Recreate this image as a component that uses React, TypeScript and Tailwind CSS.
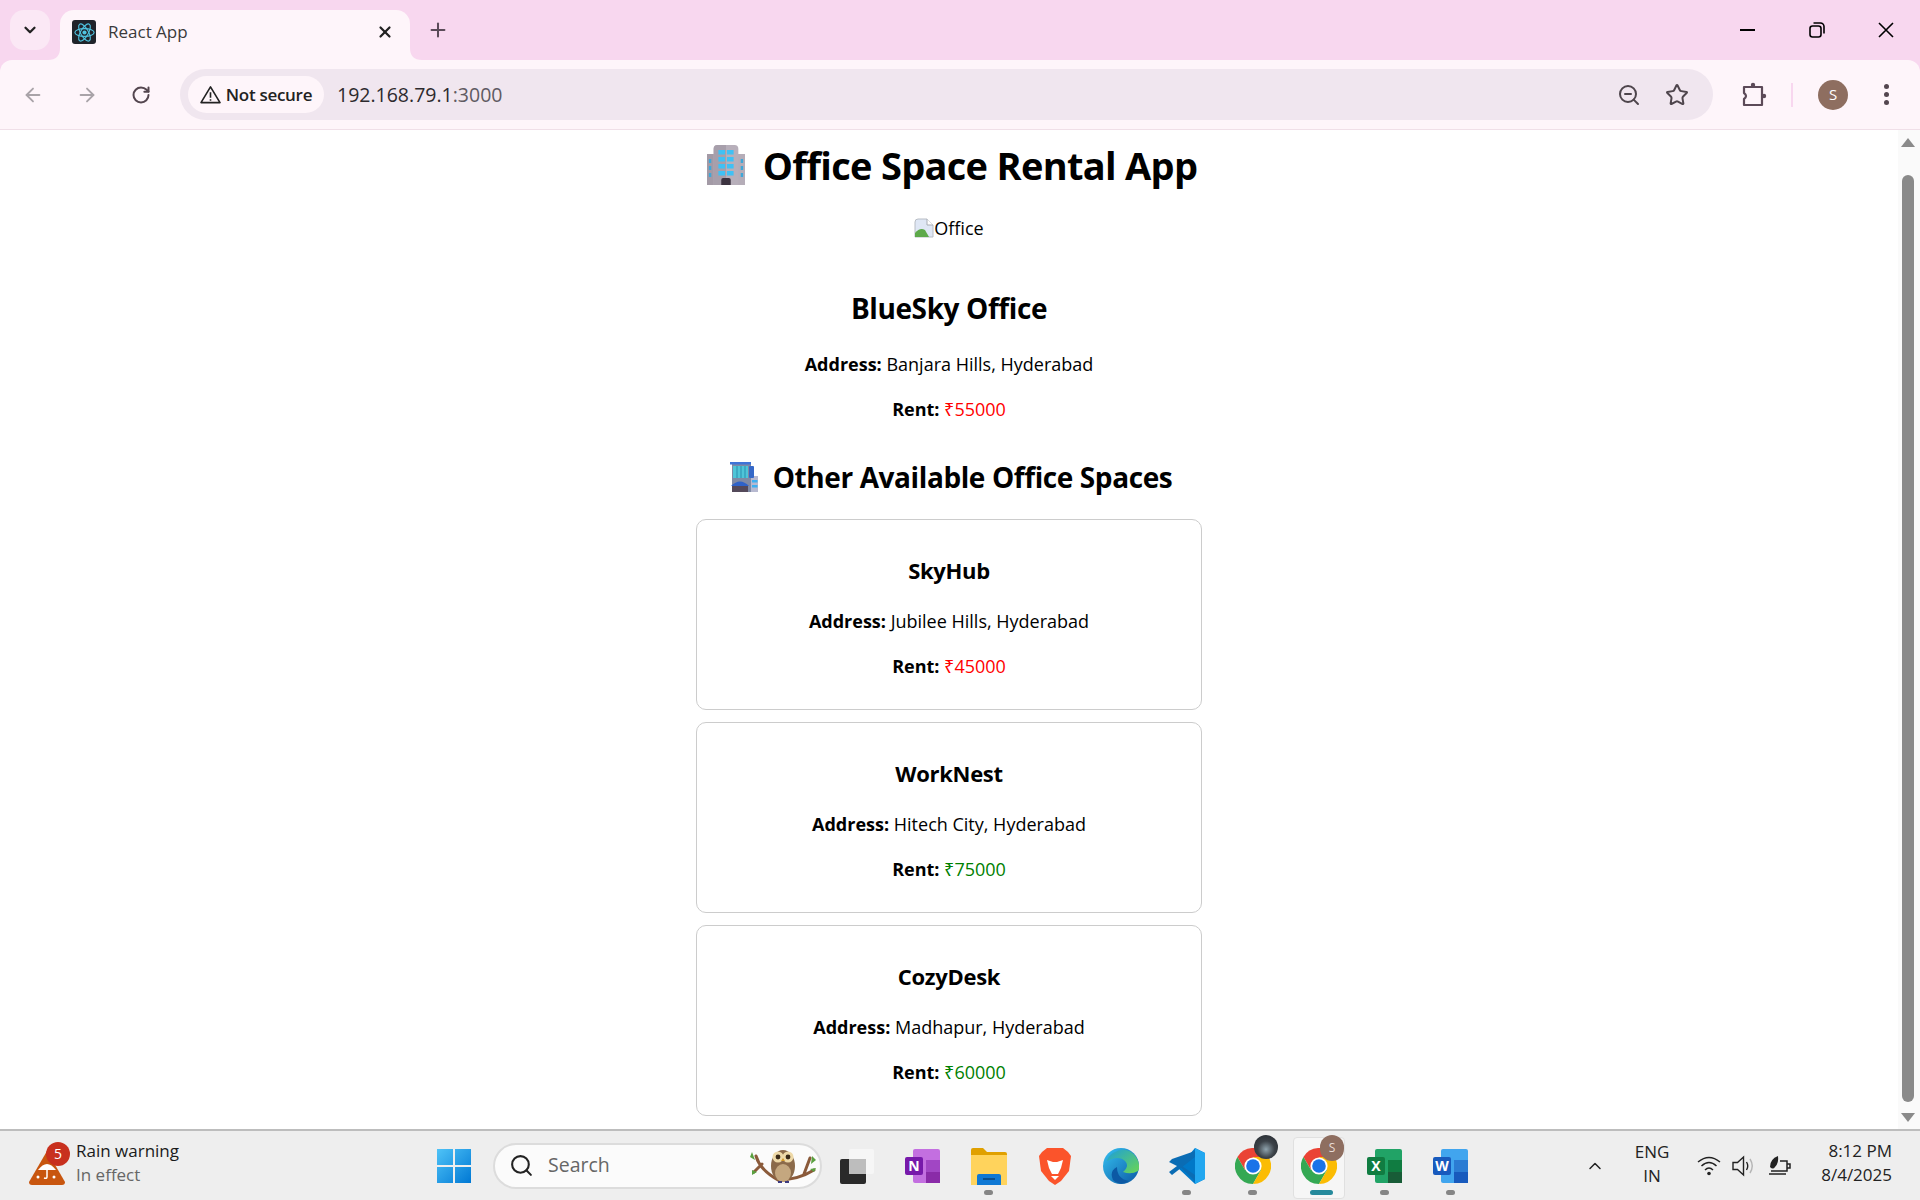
import React from "react";
import { ArrowLeft, ArrowRight, RotateCw, ZoomOut, Star, ChevronDown, X, Plus, Search, ChevronUp } from "lucide-react";

const BODY = { fontFamily: '"Open Sans","Noto Sans",sans-serif' };

function Atom({ size = 21 }: { size?: number }) {
  return (
    <svg width={size} height={size} viewBox="0 0 24 24" fill="none" stroke="#4fc3e0" strokeWidth="1.3">
      <circle cx="12" cy="12" r="2.4" fill="#4fc3e0" stroke="none" />
      <ellipse cx="12" cy="12" rx="11" ry="4.4" />
      <ellipse cx="12" cy="12" rx="11" ry="4.4" transform="rotate(60 12 12)" />
      <ellipse cx="12" cy="12" rx="11" ry="4.4" transform="rotate(120 12 12)" />
    </svg>
  );
}

function OfficeEmoji() {
  return (
    <svg width="38" height="40" viewBox="0 0 40 40" preserveAspectRatio="none">
      <rect x="0" y="9" width="9" height="31" fill="#a39aa6" />
      <rect x="31" y="9" width="9" height="31" fill="#b5adb8" />
      <path d="M7 4 Q7 0 11 0 H29 Q33 0 33 4 V40 H7Z" fill="#b7afba" />
      <path d="M7 4 Q7 0 11 0 H20 V40 H7Z" fill="#a79fab" />
      {[5, 12, 19, 26].map((y) => (
        <g key={y} fill="#3fc1f5">
          <rect x="12" y={y} width="7" height="4.5" />
          <rect x="21" y={y} width="7" height="4.5" />
        </g>
      ))}
      {[14, 21, 28].map((y) => (
        <g key={y} fill="#3fa7d8">
          <rect x="2" y={y} width="2.5" height="4" />
          <rect x="35.5" y={y} width="2.5" height="4" />
        </g>
      ))}
      <path d="M15 40 V35 Q15 33 17 33 H23 Q25 33 25 35 V40Z" fill="#3c3340" />
    </svg>
  );
}

function CityEmoji() {
  return (
    <svg width="28" height="30" viewBox="0 0 28 30">
      <rect x="2" y="1" width="19" height="29" fill="#7f8aa5" />
      <rect x="0" y="0" width="21" height="2.5" fill="#3f74d8" />
      <rect x="3" y="4" width="15" height="12" fill="#4fc5d8" />
      <path d="M7 4v12M11 4v12M15 4v12" stroke="#2a8fb0" strokeWidth="1" />
      <rect x="21" y="14" width="7" height="16" fill="#b7b9d0" />
      <rect x="22" y="18" width="5.5" height="2.5" fill="#3fb0f0" />
      <rect x="22" y="23" width="5.5" height="2.5" fill="#3fb0f0" />
      <rect x="19" y="4" width="5" height="12" rx="1" fill="#3568c8" />
      <path d="M1 24 Q10 15 19 24Z" fill="#2f62c8" />
      <rect x="2" y="24" width="16" height="6" fill="#54495a" />
    </svg>
  );
}

function BrokenImage() {
  return (
    <svg width="20" height="20" viewBox="0 0 20 20" className="shrink-0">
      <path d="M1 4 Q1 1 4 1 H13 L19 7 V19 H1Z" fill="#dfe7f5" stroke="#b8bdc5" strokeWidth="1" />
      <path d="M13 1 V7 H19" fill="#fff" stroke="#a8adb5" strokeWidth="1" />
      <path d="M1 19 V15 Q6 9 11 12 L15 19Z" fill="#5da94a" />
    </svg>
  );
}

function Chrome({ size = 36 }: { size?: number }) {
  return (
    <svg width={size} height={size} viewBox="0 0 36 36">
      <path d="M18 18 L33.6 9 A18 18 0 0 0 2.4 9 L10 22Z" fill="#ea4335" />
      <path d="M18 18 L10 22 L2.4 9 A18 18 0 0 0 18 36 L26 22Z" fill="#34a853" />
      <path d="M18 18 L26 22 L18 36 A18 18 0 0 0 33.6 9 L18 9Z" fill="#fbbc04" />
      <circle cx="18" cy="18" r="8.6" fill="#fff" />
      <circle cx="18" cy="18" r="6.8" fill="#1a73e8" />
    </svg>
  );
}

function Owl() {
  return (
    <svg width="72" height="44" viewBox="0 0 72 44">
      <path d="M8 12 Q12 26 30 36 Q50 36 66 26 M14 20 L6 28 M56 30 L62 14" stroke="#8a5a3a" strokeWidth="3" fill="none" strokeLinecap="round" />
      <path d="M4 8 l3 8 -5 -3Z M4 26 l5 2 -5 3Z M64 12 l-1 8 5 -4Z M68 24 l-6 1 4 3Z" fill="#5aa040" />
      <ellipse cx="35" cy="22" rx="12" ry="16" fill="#8b6a4a" />
      <ellipse cx="35" cy="29" rx="8" ry="9" fill="#c4a77f" />
      <circle cx="30" cy="13" r="5.5" fill="#eed9a8" />
      <circle cx="40" cy="13" r="5.5" fill="#eed9a8" />
      <circle cx="30" cy="13" r="2.4" fill="#3a2a18" />
      <circle cx="40" cy="13" r="2.4" fill="#3a2a18" />
      <path d="M35 14 l-2 3 h4Z" fill="#d59a2a" />
      <path d="M30 38 h4 M37 38 h4" stroke="#3c3a80" strokeWidth="2" />
    </svg>
  );
}

function TaskIcon({ children, dot }: { children: React.ReactNode; dot?: boolean }) {
  return (
    <div className="relative flex h-[69px] w-[66px] shrink-0 items-center justify-center">
      {children}
      {dot ? <span className="absolute bottom-[5px] left-[28px] h-[5px] w-[9px] rounded-full bg-[#858585]" /> : null}
    </div>
  );
}

function OfficeIcon({ bg, dark, mid, letter, letterBg }: { bg: string; dark: string; mid: string; letter: string; letterBg: string }) {
  return (
    <svg width="36" height="36" viewBox="0 0 36 36">
      <rect x="8" y="1" width="27" height="34" rx="2" fill={bg} />
      <rect x="21" y="12" width="14" height="12" fill={mid} />
      <rect x="21" y="24" width="14" height="11" fill={dark} />
      <rect x="0" y="9" width="18" height="18" rx="2" fill={letterBg} />
      <text x="9" y="23" textAnchor="middle" fill="#fff" fontSize="14" fontWeight="700" fontFamily="Open Sans, sans-serif">{letter}</text>
    </svg>
  );
}

function Office({ name, address, rent, color }: { name: string; address: string; rent: string; color: string }) {
  return (
    <section className="mb-[12px] flex h-[191px] w-[506px] shrink-0 flex-col items-center rounded-[10px] border border-[#cccccc] pt-[34px]">
      <h3 className="mb-[23px] text-[22px] font-bold leading-[32px] tracking-[-0.3px] text-black">{name}</h3>
      <p className="mb-[21px] text-[18px] leading-[24px] text-black"><b>Address:</b> {address}</p>
      <p className="text-[18px] leading-[24px] text-black"><b>Rent:</b> <span className={color}>{rent}</span></p>
    </section>
  );
}

export default function App() {
  return (
    <div className="flex h-[1200px] w-[1920px] flex-col overflow-hidden bg-white" style={BODY}>
      {/* tab strip */}
      <div className="flex h-[60px] shrink-0 bg-[#f8d7ef]">
        <div className="ml-[10px] mt-[10px] flex h-[40px] w-[40px] items-center justify-center rounded-[14px] bg-[#fbe8f5]">
          <ChevronDown size={18} strokeWidth={3} color="#222" />
        </div>
        <div className="relative ml-[10px] mt-[10px] flex h-[50px] w-[350px] items-center rounded-t-[14px] bg-[#fef5fa] pb-[6px] pl-[12px] pr-[16px]">
          <svg width="12" height="12" viewBox="0 0 12 12" className="absolute bottom-0 left-[-12px]"><path d="M12 0 V12 H0 Q12 12 12 0Z" fill="#fef5fa" /></svg>
          <svg width="12" height="12" viewBox="0 0 12 12" className="absolute bottom-0 right-[-12px]"><path d="M0 0 V12 H12 Q0 12 0 0Z" fill="#fef5fa" /></svg>
          <span className="flex h-[24px] w-[24px] items-center justify-center rounded-[3px] bg-[#20232a]"><Atom /></span>
          <span className="ml-[12px] flex-1 text-[17px] text-[#3a3a3a]">React App</span>
          <X size={18} strokeWidth={3} color="#222" />
        </div>
        <div className="ml-[16px] flex w-[24px] items-center justify-center"><Plus size={22} strokeWidth={2.2} color="#5a4a58" /></div>
        <div className="flex-1" />
        <div className="flex w-[69px] items-center justify-center"><span className="h-[2px] w-[15px] bg-black" /></div>
        <div className="flex w-[69px] items-center justify-center">
          <svg width="16" height="16" viewBox="0 0 16 16" fill="none" stroke="#000" strokeWidth="1.6"><rect x="1" y="4" width="11" height="11" rx="2.5" /><path d="M4.5 1h7a3.5 3.5 0 0 1 3.5 3.5v7" /></svg>
        </div>
        <div className="flex w-[69px] items-center justify-center">
          <svg width="16" height="16" viewBox="0 0 16 16" stroke="#000" strokeWidth="1.6"><path d="M1 1l14 14M15 1L1 15" /></svg>
        </div>
      </div>

      {/* toolbar */}
      <div className="flex h-[70px] shrink-0 items-start border-b-[1px] border-[#f0dfe8] bg-[#f8d7ef]">
        <div className="flex h-[69px] w-full items-center rounded-t-[12px] bg-[#fef5fa] pl-[6px]">
          <div className="flex w-[54px] justify-center"><ArrowLeft size={22} strokeWidth={2} color="#a9a3a8" /></div>
          <div className="flex w-[54px] justify-center"><ArrowRight size={22} strokeWidth={2} color="#a9a3a8" /></div>
          <div className="flex w-[54px] justify-center"><RotateCw size={20} strokeWidth={2.4} color="#54464f" /></div>
          <div className="ml-[12px] flex h-[51px] w-[1533px] items-center rounded-full bg-[#f0e6ef] pl-[8px]">
            <div className="flex h-[37px] w-[136px] items-center justify-center gap-[5px] rounded-full bg-[#fef5fa]">
              <svg width="21" height="19" viewBox="0 0 22 20" fill="none" stroke="#222" strokeWidth="1.7" className="shrink-0"><path d="M11 2 L21 18.5 H1Z" strokeLinejoin="round" /><path d="M11 7.5v6M11 15v1.6" /></svg>
              <span className="whitespace-nowrap text-[17px] font-semibold tracking-[-0.3px] text-[#222]">Not secure</span>
            </div>
            <span className="ml-[13px] text-[19.5px] text-[#2d2a2e]">192.168.79.1<span className="text-[#5f5a62]">:3000</span></span>
            <div className="flex-1" />
            <ZoomOut size={24} strokeWidth={2} color="#4e454c" />
            <Star size={24} strokeWidth={2} color="#4e454c" className="ml-[24px] mr-[24px]" />
          </div>
          <div className="ml-[20px] flex w-[40px] justify-center">
            <svg width="28" height="28" viewBox="0 0 28 28" fill="none" stroke="#5c4a58" strokeWidth="2.2" strokeLinejoin="round">
              <path d="M5 6 H23 V24 H5 V18 Q9 15 5 12Z" />
              <circle cx="14" cy="4" r="2.2" fill="#5c4a58" stroke="none" />
              <circle cx="25" cy="15" r="2.2" fill="#5c4a58" stroke="none" />
            </svg>
          </div>
          <span className="ml-[18px] h-[24px] w-[2px] bg-[#f8d7ef]" />
          <div className="ml-[25px] flex h-[30px] w-[30px] items-center justify-center rounded-full bg-[#8e6e60] text-[15px] text-white">S</div>
          <div className="ml-[28px] flex w-[20px] flex-col items-center gap-[3px]">
            <span className="h-[5px] w-[5px] rounded-full bg-[#54464f]" />
            <span className="h-[5px] w-[5px] rounded-full bg-[#54464f]" />
            <span className="h-[5px] w-[5px] rounded-full bg-[#54464f]" />
          </div>
        </div>
      </div>

      {/* page */}
      <div className="flex min-h-0 flex-1">
        <main className="flex flex-1 flex-col items-center">
          <h1 className="flex h-[70px] shrink-0 items-center pl-[6px] text-[38px] font-bold tracking-[-0.7px] text-black">
            <OfficeEmoji /><span className="ml-[18px]">Office Space Rental App</span>
          </h1>
          <div className="mt-[10px] flex h-[36px] shrink-0 items-center text-[18px] text-black"><BrokenImage /><span>Office</span></div>
          <h2 className="mt-[44px] text-[28px] font-bold leading-[36px] tracking-[-0.4px] text-black">BlueSky Office</h2>
          <p className="mt-[26px] text-[18px] leading-[24px] text-black"><b>Address:</b> Banjara Hills, Hyderabad</p>
          <p className="mt-[21px] text-[18px] leading-[24px] text-black"><b>Rent:</b> <span className="text-[#ff0000]">₹55000</span></p>
          <h2 className="mb-[24px] mt-[38px] flex h-[36px] shrink-0 items-center pl-[4px] text-[28px] font-bold tracking-[-0.4px] text-black">
            <CityEmoji /><span className="ml-[15px]">Other Available Office Spaces</span>
          </h2>
          <Office name="SkyHub" address="Jubilee Hills, Hyderabad" rent="₹45000" color="text-[#ff0000]" />
          <Office name="WorkNest" address="Hitech City, Hyderabad" rent="₹75000" color="text-[#008000]" />
          <Office name="CozyDesk" address="Madhapur, Hyderabad" rent="₹60000" color="text-[#008000]" />
        </main>
        <aside className="flex w-[22px] shrink-0 flex-col items-center bg-[#fafafa] pr-[2px]">
          <svg width="14" height="10" viewBox="0 0 14 10" className="mt-[8px]"><path d="M7 0 L14 9 H0Z" fill="#8a8a8a" /></svg>
          <div className="mt-[27px] w-[12px] flex-1 rounded-full bg-[#8a8a8a]" />
          <svg width="14" height="10" viewBox="0 0 14 10" className="mb-[6px] mt-[11px]"><path d="M0 0 H14 L7 9Z" fill="#8a8a8a" /></svg>
        </aside>
      </div>

      {/* taskbar */}
      <div className="flex h-[71px] shrink-0 items-center border-t-[2px] border-[#bdbdbd] bg-[#eeeeee]">
        <div className="flex w-[421px] shrink-0 items-center pl-[28px]">
          <div className="relative h-[42px] w-[48px]">
            <svg width="38" height="38" viewBox="0 0 38 38" className="absolute bottom-0 left-0">
              <path d="M19 2 L37 33 Q37 36 34 36 H4 Q1 36 1 33Z" fill="#c8560f" />
              <path d="M10 21 Q19 9 28 21Z" fill="#fff" />
              <path d="M19 21 v7 q0 2 -3 1" stroke="#fff" strokeWidth="1.5" fill="none" />
              <circle cx="10" cy="28" r="1.5" fill="#fff" /><circle cx="26" cy="28" r="1.5" fill="#fff" />
            </svg>
            <span className="absolute left-[18px] top-[-3px] flex h-[24px] w-[24px] items-center justify-center rounded-full bg-[#c8301e] text-[14px] text-white">5</span>
          </div>
          <div className="flex flex-col pb-[6px] text-[17px] leading-[24px]">
            <span className="text-[#1a1a1a]">Rain warning</span>
            <span className="text-[#666666]">In effect</span>
          </div>
        </div>
        <TaskIcon>
          <svg width="36" height="36" viewBox="0 0 36 36"><defs><linearGradient id="w" x1="0" y1="0" x2="1" y2="1"><stop offset="0" stopColor="#4fc3f7" /><stop offset="1" stopColor="#0078d4" /></linearGradient></defs><path d="M1 1h16v16H1zM19 1h16v16H19zM1 19h16v16H1zM19 19h16v16H19z" fill="url(#w)" /></svg>
        </TaskIcon>
        <div className="ml-[6px] flex h-[46px] w-[329px] shrink-0 items-center rounded-full border-[2px] border-[#dcdcdc] bg-[#fbfbfb] pl-[14px]">
          <Search size={25} strokeWidth={2} color="#222" />
          <span className="ml-[14px] flex-1 pb-[1px] text-[19.5px] text-[#666666]">Search</span>
          <Owl />
        </div>
        <div className="ml-[2px] flex">
          <TaskIcon>
            <svg width="34" height="36" viewBox="0 0 34 36"><rect x="0" y="11" width="26" height="25" rx="2" fill="#2a2a2a" /><rect x="9" y="1" width="25" height="25" rx="2" fill="#f6f6f6" /><rect x="9" y="11" width="17" height="15" fill="#bdbdbd" /></svg>
          </TaskIcon>
          <TaskIcon><OfficeIcon bg="#c36fe0" mid="#a146c4" dark="#8a2ba8" letter="N" letterBg="#7719aa" /></TaskIcon>
          <TaskIcon dot>
            <svg width="36" height="38" viewBox="0 0 36 38"><path d="M0 3 Q0 1 2 1 H12 L16 5 H34 Q36 5 36 7 V38 H0Z" fill="#e0a000" /><path d="M0 8 H36 V38 H0Z" fill="#ffd35c" /><path d="M6 38 V29 Q6 27 8 27 H28 Q30 27 30 29 V38Z" fill="#0f78d4" /><rect x="12" y="31" width="12" height="2" fill="#0a4f8f" /></svg>
          </TaskIcon>
          <TaskIcon>
            <svg width="32" height="38" viewBox="0 0 32 38"><path d="M8 1 H24 L29 5 L32 9 L30 24 L22 34 L16 38 L10 34 L2 24 L0 9 L3 5Z" fill="#fb542b" /><path d="M8 13 L14 15 H18 L24 13 L22 21 L19 27 H13 L10 21Z M12 29 H20 L16 33Z" fill="#fff" /></svg>
          </TaskIcon>
          <TaskIcon>
            <svg width="36" height="38" viewBox="0 0 36 38"><defs><linearGradient id="e" x1="0" y1="0" x2="1" y2="1"><stop offset="0" stopColor="#35c1f1" /><stop offset="1" stopColor="#0c59a4" /></linearGradient><linearGradient id="e2" x1="0" y1="0" x2="1" y2="1"><stop offset="0" stopColor="#1e9fd8" /><stop offset="1" stopColor="#6ad652" /></linearGradient></defs><circle cx="18" cy="19" r="18" fill="url(#e)" /><path d="M10 6 Q24 -2 33 10 Q38 18 35 24 Q28 28 20 25 Q27 19 22 14 Q16 8 4 14 Q5 9 10 6Z" fill="url(#e2)" /><path d="M14 20 Q14 32 26 34 Q18 40 10 33 Q6 24 14 20Z" fill="#0c59a4" /></svg>
          </TaskIcon>
          <TaskIcon dot>
            <svg width="36" height="36" viewBox="0 0 36 36"><path d="M26 0 L36 5 V31 L26 36 L9 20Z" fill="#0078c8" /><path d="M26 0 L36 5 V31 L26 36Z" fill="#22a7f0" /><path d="M3 11 L0 14 L8 18 L0 24 L3 27 L26 9 V3Z M3 11 L26 33 V27 L10 16Z" fill="#0a6cb4" /></svg>
          </TaskIcon>
          <TaskIcon dot>
            <div className="relative"><Chrome /><span className="absolute left-[19px] top-[-13px] h-[24px] w-[24px] rounded-full bg-[radial-gradient(circle_at_50%_60%,#8fa3ad_0%,#3c4248_45%,#22272c_100%)]" /></div>
          </TaskIcon>
          <TaskIcon>
            <div className="absolute bottom-[1px] left-[7px] h-[62px] w-[52px] rounded-[4px] border border-[#e0e0e0] bg-[#f6f6f6]" />
            <div className="relative"><Chrome /><span className="absolute left-[19px] top-[-13px] flex h-[26px] w-[24px] items-center justify-center rounded-full bg-[#8e6e60] text-[12px] text-[#e8dcd6]">S</span></div>
            <span className="absolute bottom-[5px] left-[24px] h-[5px] w-[23px] rounded-full bg-[#268a9c]" />
          </TaskIcon>
          <TaskIcon dot><OfficeIcon bg="#21a366" mid="#107c41" dark="#185c37" letter="X" letterBg="#107c41" /></TaskIcon>
          <TaskIcon dot><OfficeIcon bg="#41a5ee" mid="#2b7cd3" dark="#185abd" letter="W" letterBg="#185abd" /></TaskIcon>
        </div>
        <div className="flex flex-1 items-center">
          <div className="ml-[101px] flex w-[20px] justify-center"><ChevronUp size={22} strokeWidth={1.8} color="#222" /></div>
          <div className="ml-[15px] flex w-[64px] flex-col items-center pb-[3px] text-[17px] leading-[24px] text-[#222]"><span>ENG</span><span>IN</span></div>
          <svg width="24" height="22" viewBox="0 0 24 22" fill="none" stroke="#222" strokeWidth="1.5" className="ml-[13px]"><path d="M1 7 Q12 -2 23 7M4.5 11 Q12 4 19.5 11M8 15 Q12 11 16 15" /><circle cx="12" cy="18.5" r="1.8" fill="#222" stroke="none" /></svg>
          <svg width="26" height="24" viewBox="0 0 26 24" fill="none" stroke="#222" strokeWidth="1.4" className="ml-[11px]"><path d="M1 8.5 H5.5 L11.5 3 V21 L5.5 15.5 H1Z" /><path d="M14.5 8 Q17 12 14.5 16" /><path d="M18 5 Q22.5 12 18 19" stroke="#b5b5b5" /></svg>
          <svg width="26" height="22" viewBox="0 0 26 22" className="ml-[10px]"><path d="M3 16 H19 V6 H12M19 9 H22 V13 H19" fill="none" stroke="#222" strokeWidth="1.5" /><path d="M2 12 Q2 4 10 1 Q11 8 7 12 Q5 15 2 12Z" fill="#222" /><path d="M1 19 H18" stroke="#222" strokeWidth="1.5" /></svg>
          <div className="ml-[8px] flex w-[90px] flex-col items-end whitespace-nowrap pb-[5px] text-[17px] leading-[24px] text-[#222]"><span>8:12 PM</span><span>8/4/2025</span></div>
        </div>
      </div>
    </div>
  );
}
